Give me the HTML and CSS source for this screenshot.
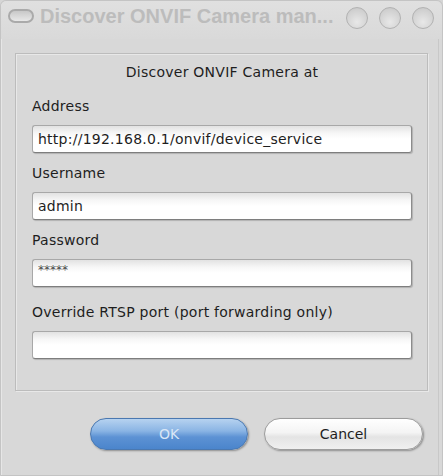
FILE: index.html
```html
<!DOCTYPE html>
<html>
<head>
<meta charset="utf-8">
<link rel="stylesheet" href="styles.css">
</head>
<body>
<div class="window">
  <div class="titlebar">
    <span class="tb-icon"></span>
    <span class="tb-title">Discover ONVIF Camera man...</span>
    <div class="tb-buttons">
      <span class="tb-circle"></span>
      <span class="tb-circle"></span>
      <span class="tb-circle"></span>
    </div>
  </div>
  <div class="body">
    <div class="group">
      <div class="group-title">Discover ONVIF Camera at</div>
      <div class="field">
        <div class="label">Address</div>
        <div class="input">http://192.168.0.1/onvif/device_service</div>
      </div>
      <div class="field">
        <div class="label">Username</div>
        <div class="input">admin</div>
      </div>
      <div class="field">
        <div class="label">Password</div>
        <div class="input pw">*****</div>
      </div>
      <div class="field last">
        <div class="label">Override RTSP port (port forwarding only)</div>
        <div class="input"></div>
      </div>
    </div>
    <div class="buttons">
      <button class="btn btn-ok">OK</button>
      <button class="btn btn-cancel">Cancel</button>
    </div>
  </div>
</div>
</body>
</html>
```
FILE: styles.css
```css
html, body {
  margin: 0;
  padding: 0;
  background: #d6d6d6;
}
.window {
  width: 441px;
  height: 474px;
  border: 1px solid #c4c4c4;
  border-radius: 6px 6px 0 0;
  background: #d8d8d8;
  font-family: "DejaVu Sans", Verdana, sans-serif;
  font-size: 14px;
  letter-spacing: 0.25px;
  color: #1e1e1e;
  display: flex;
  flex-direction: column;
  box-shadow: inset 1px 0 0 #e6e6e6, inset -3px 0 0 #d8d8d8, inset -4px 0 0 #c8c8c8;
}
.titlebar {
  height: 38px;
  display: flex;
  align-items: center;
  padding: 0 8px 8px 7px;
  box-sizing: border-box;
  background: linear-gradient(#e0e0e0, #d9d9d9);
  border-radius: 6px 6px 0 0;
}
.tb-icon {
  width: 22px;
  height: 10px;
  border: 2px solid #aaaaaa;
  border-radius: 7px;
  background: linear-gradient(#c8c8c8, #e8e8e8);
  margin-right: 6px;
}
.tb-title {
  font-family: "Liberation Sans", Arial, sans-serif;
  font-weight: bold;
  font-size: 20px;
  letter-spacing: 0;
  color: #bcbcbc;
  flex: 1;
}
.tb-buttons {
  display: flex;
  gap: 11px;
  margin-top: 4px;
}
.tb-circle {
  width: 20px;
  height: 20px;
  border: 1px solid #b2b2b2;
  border-radius: 50%;
  background: radial-gradient(circle at 50% 70%, #e8e8e8, #d0d0d0 70%, #c2c2c2);
}
.body {
  flex: 1;
  display: flex;
  flex-direction: column;
  padding: 14px 0 0 14px;
}
.group {
  width: 413px;
  height: 338px;
  border: 1px solid #bcbcbc;
  box-shadow: inset 1px 1px 0 #e8e8e8, 1px 1px 0 #e8e8e8;
  box-sizing: border-box;
  padding: 8px 15px 0 16px;
}
.group-title {
  text-align: center;
  height: 20px;
  line-height: 20px;
  margin-bottom: 15px;
}
.field {
  margin-bottom: 11px;
}
.field.last {
  margin-top: 16px;
}
.label {
  height: 18px;
  line-height: 18px;
  margin-bottom: 10px;
}
.input {
  height: 28px;
  box-sizing: border-box;
  border: 1px solid #a8a8a8;
  border-right-color: #8c8c8c;
  border-bottom-color: #7e7e7e;
  border-radius: 3px;
  background: linear-gradient(#e2e2e2 0, #f6f6f6 7px, #ffffff 13px);
  box-shadow: 1px 1px 1px rgba(0,0,0,0.18);
  padding: 4px 5px;
  line-height: 18px;
  white-space: nowrap;
}
.input.pw {
  font-size: 12px;
  letter-spacing: 0;
  color: #4a4a4a;
  line-height: 14px;
  padding-top: 3px;
}
.buttons {
  display: flex;
  justify-content: flex-end;
  gap: 16px;
  padding: 27px 19px 0 0;
}
.btn {
  width: 158px;
  height: 32px;
  border-radius: 16px;
  font-family: "DejaVu Sans", Verdana, sans-serif;
  font-size: 14px;
  padding: 0;
  box-shadow: 1px 1px 2px rgba(0,0,0,0.35);
}
.btn-ok {
  border: 1px solid #4a78b0;
  color: #d9e6f6;
  background: linear-gradient(#b6d2f0 0%, #8ab4e4 40%, #5d92d4 60%, #4b85cc 100%);
}
.btn-cancel {
  width: 159px;
  border: 1px solid #9c9c9c;
  color: #1e1e1e;
  background: linear-gradient(#ffffff 0%, #f4f4f4 45%, #e4e4e4 60%, #f0f0f0 100%);
}
```
